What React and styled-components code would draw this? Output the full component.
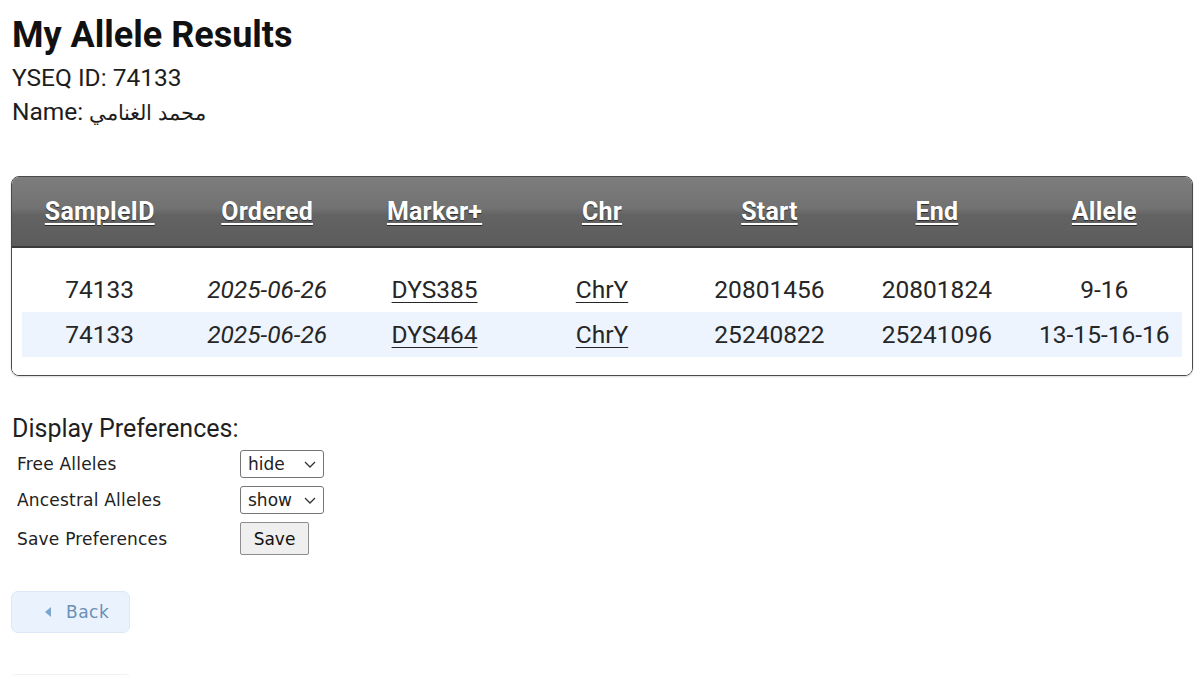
import React from "react";
import styled, { createGlobalStyle } from "styled-components";

const GlobalStyle = createGlobalStyle`
  html, body {
    margin: 0;
    padding: 0;
    background: #fff;
  }
  body {
    font-family: Roboto, "Liberation Sans", Arial, sans-serif;
    color: #1a1a1a;
  }
`;

const Page = styled.div`
  padding: 0 7px 0 11px;
`;

const Title = styled.h1`
  margin: 15px 0 6px 1px;
  font-size: 36px;
  line-height: 40px;
  font-weight: 700;
  color: #111;
`;

const InfoLine = styled.div`
  margin-left: 1px;
  height: 34px;
  font-size: 24.5px;
  line-height: 34px;
  color: #1d1d1d;
`;

const Arabic = styled.span`
  font-size: 21px;
  line-height: 1;
`;

const TableBox = styled.div`
  margin-top: 47px;
  border: 1px solid #4a4a4a;
  border-radius: 8px;
  overflow: hidden;
  box-shadow: 0 1px 2px rgba(0, 0, 0, 0.15);
`;

const Grid = styled.div`
  display: grid;
  grid-template-columns: repeat(7, 1fr);
`;

const HeadRow = styled(Grid)`
  height: 71px;
  padding: 0 4px;
  align-items: center;
  background: linear-gradient(#7d7d7d 0%, #727272 45%, #636363 55%, #5c5c5c 100%);
  border-bottom: 2px solid #3b3b3b;
  box-sizing: border-box;
`;

const HeadCell = styled.a`
  justify-self: center;
  font-size: 25px;
  font-weight: 700;
  color: #fff;
  text-decoration: underline;
  text-decoration-thickness: 2px;
  text-underline-offset: 3px;
  text-shadow: 0 1px 1px #2a2a2a;
  letter-spacing: 0.2px;
`;

const Body = styled.div`
  padding: 19px 4px 18px;
  background: #fff;
`;

const Row = styled(Grid)`
  height: 45px;
  align-items: center;
  background: ${props =>
    props.$striped
      ? "linear-gradient(#edf4fd, #edf4fd) no-repeat 6px 0 / calc(100% - 12px) 100%"
      : "transparent"};
`;

const Cell = styled.div`
  text-align: center;
  font-size: 24.5px;
  color: #262626;
  font-style: ${props => (props.$italic ? "italic" : "normal")};
`;

const LinkCell = styled(Cell)`
  text-decoration: underline;
  text-decoration-thickness: 1px;
  text-underline-offset: 4px;
`;

const PrefTitle = styled.div`
  margin: 39px 0 7px 1px;
  font-size: 25px;
  line-height: 28px;
  color: #1f1f1f;
`;

const PrefGrid = styled.div`
  display: grid;
  grid-template-columns: 223px auto;
  row-gap: 8px;
  margin-left: 6px;
  align-items: center;
  justify-items: start;
`;

const PrefLabel = styled.div`
  font-family: "DejaVu Sans", Verdana, sans-serif;
  font-size: 17px;
  color: #222;
  letter-spacing: 0.2px;
`;

const SelectWrap = styled.div`
  position: relative;
  width: 84px;
  height: 28px;

  & > svg {
    position: absolute;
    right: 8px;
    top: 11px;
    pointer-events: none;
  }
`;

const Select = styled.select`
  appearance: none;
  width: 84px;
  height: 28px;
  padding: 0 0 0 7px;
  font-family: "DejaVu Sans", Verdana, sans-serif;
  font-size: 17px;
  color: #222;
  background: #fff;
  border: 1px solid #767676;
  border-radius: 3px;
`;

const SaveButton = styled.button`
  width: 69px;
  height: 33px;
  font-family: "DejaVu Sans", Verdana, sans-serif;
  font-size: 17px;
  color: #111;
  background: #efefef;
  border: 1px solid #8d8d8d;
  border-radius: 2px;
`;

const BackButton = styled.a`
  display: flex;
  align-items: center;
  gap: 14px;
  width: 119px;
  height: 42px;
  box-sizing: border-box;
  margin-top: 36px;
  padding-left: 32px;
  background: #eaf3fd;
  border: 1px solid #dce8f5;
  border-radius: 7px;
  font-family: "DejaVu Sans", Verdana, sans-serif;
  font-size: 17px;
  color: #6b8fb3;
  letter-spacing: 0.5px;
`;

const GhostButton = styled.div`
  width: 119px;
  height: 4px;
  margin-top: 41px;
  border-top: 1px solid #eef2f6;
  border-radius: 7px 7px 0 0;
`;

const columns = ["SampleID", "Ordered", "Marker+", "Chr", "Start", "End", "Allele"];

const rows = [
  { id: "74133", date: "2025-06-26", marker: "DYS385", chr: "ChrY", start: "20801456", end: "20801824", allele: "9-16" },
  { id: "74133", date: "2025-06-26", marker: "DYS464", chr: "ChrY", start: "25240822", end: "25241096", allele: "13-15-16-16" },
];

const Chevron = () => (
  <svg width="12" height="7" viewBox="0 0 12 7">
    <path d="M1 1 L6 6 L11 1" fill="none" stroke="#333" strokeWidth="1.3" />
  </svg>
);

const PrefSelect = ({ value }) => (
  <SelectWrap>
    <Select defaultValue={value}>
      <option value="hide">hide</option>
      <option value="show">show</option>
    </Select>
    <Chevron />
  </SelectWrap>
);

const App = () => {
  return (
    <Page>
      <GlobalStyle />
      <Title>My Allele Results</Title>
      <InfoLine>YSEQ ID: 74133</InfoLine>
      <InfoLine>
        Name: <Arabic lang="ar">محمد الغنامي</Arabic>
      </InfoLine>

      <TableBox>
        <HeadRow>
          {columns.map(c => (
            <HeadCell key={c}>{c}</HeadCell>
          ))}
        </HeadRow>
        <Body>
          {rows.map((r, i) => (
            <Row key={r.marker} $striped={i % 2 === 1}>
              <Cell>{r.id}</Cell>
              <Cell $italic>{r.date}</Cell>
              <LinkCell>{r.marker}</LinkCell>
              <LinkCell>{r.chr}</LinkCell>
              <Cell>{r.start}</Cell>
              <Cell>{r.end}</Cell>
              <Cell>{r.allele}</Cell>
            </Row>
          ))}
        </Body>
      </TableBox>

      <PrefTitle>Display Preferences:</PrefTitle>
      <PrefGrid>
        <PrefLabel>Free Alleles</PrefLabel>
        <PrefSelect value="hide" />
        <PrefLabel>Ancestral Alleles</PrefLabel>
        <PrefSelect value="show" />
        <PrefLabel>Save Preferences</PrefLabel>
        <SaveButton>Save</SaveButton>
      </PrefGrid>

      <BackButton>
        <svg width="8" height="10" viewBox="0 0 8 10">
          <path d="M7 0 L1 5 L7 10 Z" fill="#7aa6d0" />
        </svg>
        Back
      </BackButton>
      <GhostButton />
    </Page>
  );
};

export default App;
